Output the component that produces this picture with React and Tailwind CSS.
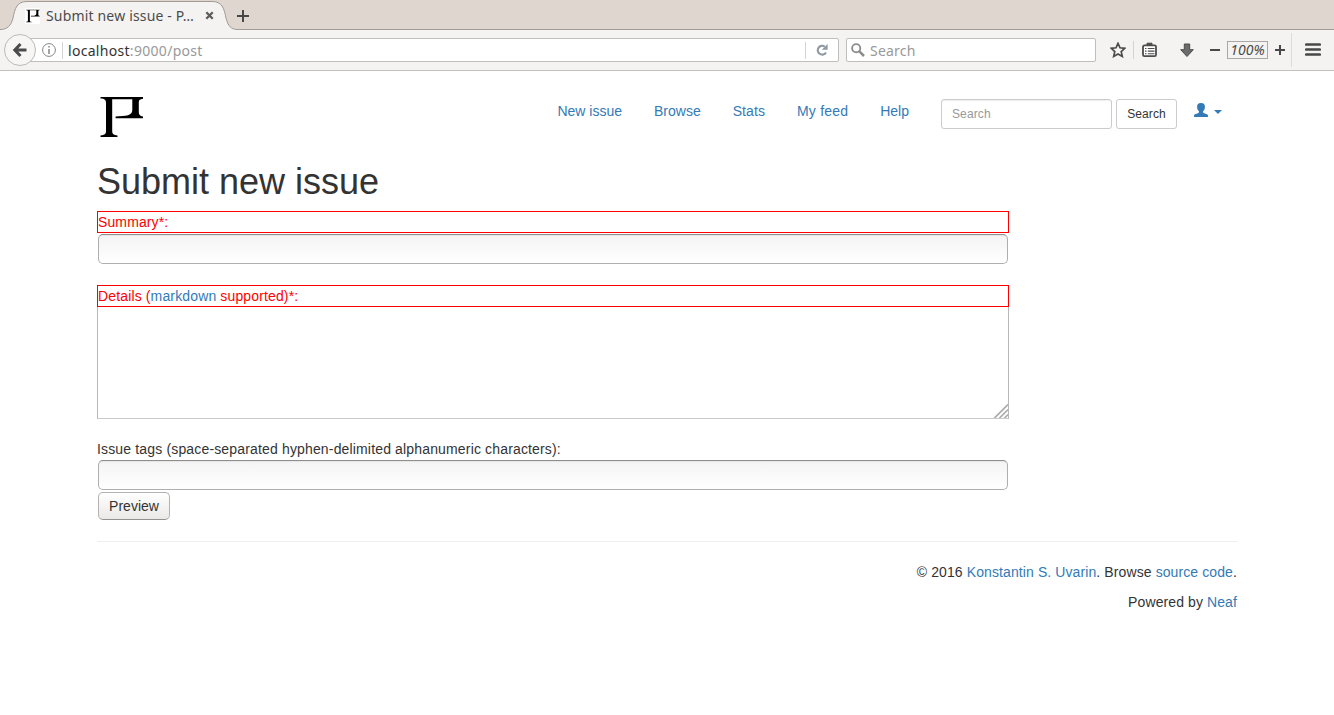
const link = "text-[#337ab7]";

const navItems = [
  { name: "New issue", spacing: "tracking-normal" },
  { name: "Browse", spacing: "tracking-normal" },
  { name: "Stats", spacing: "tracking-[0.08px]" },
  { name: "My feed", spacing: "tracking-[0.2px]" },
  { name: "Help", spacing: "tracking-normal" },
];

function Logo({ className }) {
  return (
    <svg className={className} viewBox="0 0 44 42" fill="#000">
      <path d="M0.5 1H43V2.8C40 3.2 38.8 4 38.8 6V16C38.8 18.5 39.8 20 43 20.4V22.2H15.6V20.6C20 19.8 25 20 28 19.2C31 18.2 32.3 16.5 32.3 14V3.2H12.2V35C12.2 38 13.5 39 17.5 39.4V41H0.5V39.4C4.8 39 6 38 6 35V7C6 4 4.8 2.8 0.5 2.6Z" />
    </svg>
  );
}

function Tab() {
  return (
    <div className="relative flex h-[31px] w-[238px] shrink-0 items-center pl-[25px]">
      <svg className="absolute left-0 top-0" width="238" height="31" viewBox="0 0 238 31">
        <path
          d="M0 29.5C7 29.5 11 26 13 18C15 8 17 1.5 27 1.5H212C222 1.5 224 8 226 18C228 26 231 29.5 238 29.5V31H0Z"
          fill="#f4f3f1"
        />
        <path
          d="M0 29.5C7 29.5 11 26 13 18C15 8 17 1.5 27 1.5H212C222 1.5 224 8 226 18C228 26 231 29.5 238 29.5"
          fill="none"
          stroke="#a09b96"
        />
      </svg>
      <div className="relative flex h-4 w-[15px] items-center justify-center bg-white">
        <Logo className="h-[14px] w-[14px]" />
      </div>
      <span className="relative ml-[6px] w-[150px] whitespace-nowrap text-[14px] leading-5 tracking-[0.17px] text-[#4c4c4c]">
        Submit new issue - P…
      </span>
      <svg className="relative ml-[9px]" width="9" height="9" viewBox="0 0 9 9">
        <path d="M1.3 1.3L7.7 7.7M7.7 1.3L1.3 7.7" stroke="#5d5c5b" strokeWidth="2.3" />
      </svg>
    </div>
  );
}

function BrowserBar() {
  return (
    <div className="flex h-[41px] items-center border-b border-[#c4c0bd] bg-[#f4f3f1]">
      <div className="z-10 ml-1 flex size-8 shrink-0 items-center justify-center rounded-full border border-[#bdb9b6] bg-[#f7f6f5]">
        <svg width="16" height="16" viewBox="0 0 16 16" fill="none" stroke="#4b4b4b" strokeWidth="3">
          <path d="M8.5 2L2.8 8L8.5 14M2.8 8H14.5" />
        </svg>
      </div>
      <div className="-ml-[7px] flex h-6 w-[810px] shrink-0 items-center rounded-r-[2px] border border-[#c0bdba] bg-white pl-[12px]">
        <svg width="14" height="14" viewBox="0 0 14 14" fill="none" stroke="#858585">
          <circle cx="7" cy="7" r="6.4" />
          <path d="M7 3V4.6M7 6V11" strokeWidth="1.5" />
        </svg>
        <div className="ml-[6px] h-[17px] w-px bg-[#d5d3d1]" />
        <span className="ml-[5px] mt-[2px] text-[14px] leading-5 tracking-[0.3px] text-[#999]">
          <span className="text-[#333]">localhost</span>:9000/post
        </span>
        <div className="ml-auto h-[17px] w-px bg-[#d5d3d1]" />
        <svg className="ml-[10px] mr-[10px]" width="12" height="12" viewBox="0 0 12 12">
          <path d="M10 8.4A4.4 4.4 0 1 1 8.7 2.6" fill="none" stroke="#8e99a2" strokeWidth="2.1" />
          <path d="M11.6 0V5.8H5.8Z" fill="#8e99a2" />
        </svg>
      </div>
      <div className="ml-[7px] flex h-6 w-[250px] shrink-0 items-center rounded-[2px] border border-[#c0bdba] bg-white pl-1">
        <svg width="14" height="14" viewBox="0 0 14 14" fill="none" stroke="#8d8d8d">
          <circle cx="5.2" cy="5.2" r="4.1" strokeWidth="1.9" />
          <path d="M8.4 8.4L13 13" strokeWidth="2.5" />
        </svg>
        <span className="ml-[5px] mt-[2px] text-[14px] leading-5 tracking-[0.2px] text-[#999]">Search</span>
      </div>
      <svg className="ml-[14px] shrink-0" width="16" height="16" viewBox="0 0 16 16">
        <path
          d="M8 1.3L10 5.8L14.8 6.3L11.2 9.6L12.3 14.4L8 11.9L3.7 14.4L4.8 9.6L1.2 6.3L6 5.8Z"
          fill="#f7f6f5"
          stroke="#4c4c4c"
          strokeWidth="1.7"
        />
      </svg>
      <div className="ml-[7px] h-[18px] w-px shrink-0 bg-[#d5d3d1]" />
      <svg className="ml-[8px] shrink-0" width="15" height="16" viewBox="0 0 15 16">
        <path d="M5 3V1.2H10V3" fill="#4c4c4c" stroke="#4c4c4c" />
        <rect x="1" y="3.4" width="13" height="10.8" rx="1.4" fill="#fff" stroke="#4c4c4c" strokeWidth="1.8" />
        <path d="M3 6.5H4.5M3 9.1H4.5M3 11.7H4.5M5.8 6.5H12.5M5.8 9.1H12.5M5.8 11.7H12.5" stroke="#4c4c4c" strokeWidth="1.1" />
      </svg>
      <svg className="ml-[23px] shrink-0" width="14" height="15" viewBox="0 0 14 15">
        <path d="M4.3 1H9.7V6.7H13.3L7 13.5L0.7 6.7H4.3Z" fill="#6b6b6b" stroke="#4a4a4a" />
      </svg>
      <div className="ml-[16px] h-[2px] w-[10px] shrink-0 bg-[#484848]" />
      <div className="ml-[7px] flex h-[18px] w-[41px] shrink-0 items-center justify-center border border-[#aaa8a6] text-[14px] italic leading-4 tracking-[0.05px] text-[#4c4c4c]">
        100%
      </div>
      <svg className="ml-[7px] shrink-0" width="10" height="10" viewBox="0 0 10 10">
        <path d="M0 5H10M5 0V10" stroke="#484848" strokeWidth="2" />
      </svg>
      <div className="ml-[6px] h-[34px] w-px shrink-0 bg-[#dedcda]" />
      <svg className="mb-[2px] ml-[13px] shrink-0" width="16" height="13" viewBox="0 0 16 13">
        <path d="M1.3 1.5H14.7M1.3 6.5H14.7M1.3 11.5H14.7" stroke="#484848" strokeWidth="2.7" strokeLinecap="round" />
      </svg>
    </div>
  );
}

function TextInput() {
  return (
    <input
      type="text"
      className="mx-px block h-[30px] w-[910px] rounded-[5px] border border-[#b0afae] border-t-[#8f8e8d] bg-linear-to-b from-[#f4f4f4] to-white px-2 shadow-[inset_0_1px_1px_#e6e6e6] outline-none"
    />
  );
}

function Header() {
  return (
    <header className="flex h-[92px] items-start">
      <Logo className="ml-[3px] mt-[25px] h-[42px] w-[44px]" />
      <nav className="ml-auto mt-[30px] flex gap-8">
        {navItems.map(({ name, spacing }) => (
          <a key={name} className={`${link} ${spacing}`}>{name}</a>
        ))}
      </nav>
      <input
        type="text"
        placeholder="Search"
        className="ml-8 mt-7 h-[30px] w-[171px] rounded-[3px] border border-[#ccc] px-[10px] text-[12px] tracking-[0.12px] shadow-[inset_0_1px_1px_rgba(0,0,0,0.075)] outline-none placeholder:text-[#999]"
      />
      <button className="ml-1 mt-7 h-[30px] w-[61px] rounded-[3px] border border-[#ccc] bg-white text-[12px] tracking-[0.12px]">Search</button>
      <a className="ml-[17px] mr-[15px] mt-[31px] flex h-4 items-center gap-[6px]">
        <svg width="14" height="14" viewBox="0 0 14 14" fill="#337ab7">
          <path d="M7 0C9.8 0 11.1 1.6 10.9 4.2C10.8 6.2 10 7.3 9.1 8.3C8.8 9.2 9.1 9.8 10.1 10.2L13 11.3C13.8 11.7 14 12.2 14 14H0C0 12.2 0.2 11.7 1 11.3L3.9 10.2C4.9 9.8 5.2 9.2 4.9 8.3C4 7.3 3.2 6.2 3.1 4.2C2.9 1.6 4.2 0 7 0Z" />
        </svg>
        <svg className="mt-[3px]" width="8" height="4" viewBox="0 0 8 4" fill="#337ab7">
          <path d="M0 0H8L4 4Z" />
        </svg>
      </a>
    </header>
  );
}

export default function App() {
  return (
    <div className="flex h-[715px] w-[1334px] flex-col overflow-hidden bg-white">
      <div className="font-['Noto_Sans',sans-serif]">
        <div className="flex h-[30px] bg-[#dfd6cf] shadow-[inset_0_-1px_0_#a09b96]">
          <Tab />
          <svg className="-ml-px mt-[10px]" width="12" height="12" viewBox="0 0 12 12">
            <path d="M0 6H12M6 0V12" stroke="#484848" strokeWidth="2" />
          </svg>
        </div>
        <BrowserBar />
      </div>
      <main className="ml-[97px] w-[1140px] font-['Liberation_Sans',Arial,sans-serif] text-[14px] leading-5 text-[#333]">
        <Header />
        <h1 className="h-12 whitespace-nowrap text-[36px] leading-[37px]">Submit new issue</h1>
        <form className="w-[912px]">
          <div className="mb-px h-[22px] border border-[#f00] tracking-[0.12px] text-[#f00]">Summary*:</div>
          <TextInput />
          <div className="mt-[21px] h-[22px] border border-[#f00] tracking-[0.14px] text-[#f00]">
            Details (<a className={link}>markdown</a> supported)*:
          </div>
          <div className="flex h-[112px] items-end justify-end border border-t-0 border-[#b9b8b7] border-b-[#cbcac9] bg-white">
            <svg width="14" height="14" viewBox="0 0 14 14">
              <path d="M0.5 14L14 0.5M5.5 14L14 5.5M10.5 14L14 10.5" stroke="#aaa" strokeWidth="1.6" />
            </svg>
          </div>
          <div className="mb-px mt-5 h-5 tracking-[0.157px]">
            Issue tags (space-separated hyphen-delimited alphanumeric characters):
          </div>
          <TextInput />
          <button
            type="button"
            className="ml-px mt-[2px] block h-7 w-[72px] rounded-[5px] border border-[#b4b2b0] border-b-[#949290] bg-linear-to-b from-white to-[#ebe9e7] leading-[26px]"
          >
            Preview
          </button>
        </form>
        <hr className="mb-5 mt-[21px] border-[#eee]" />
        <footer className="flex flex-col gap-[10px] text-right">
          <p className="tracking-[0.1px]">
            © 2016 <a className={link}>Konstantin S. Uvarin</a>. Browse <a className={link}>source code</a>.
          </p>
          <p className="tracking-[0.1px]">
            Powered by <a className={link}>Neaf</a>
          </p>
        </footer>
      </main>
    </div>
  );
}
